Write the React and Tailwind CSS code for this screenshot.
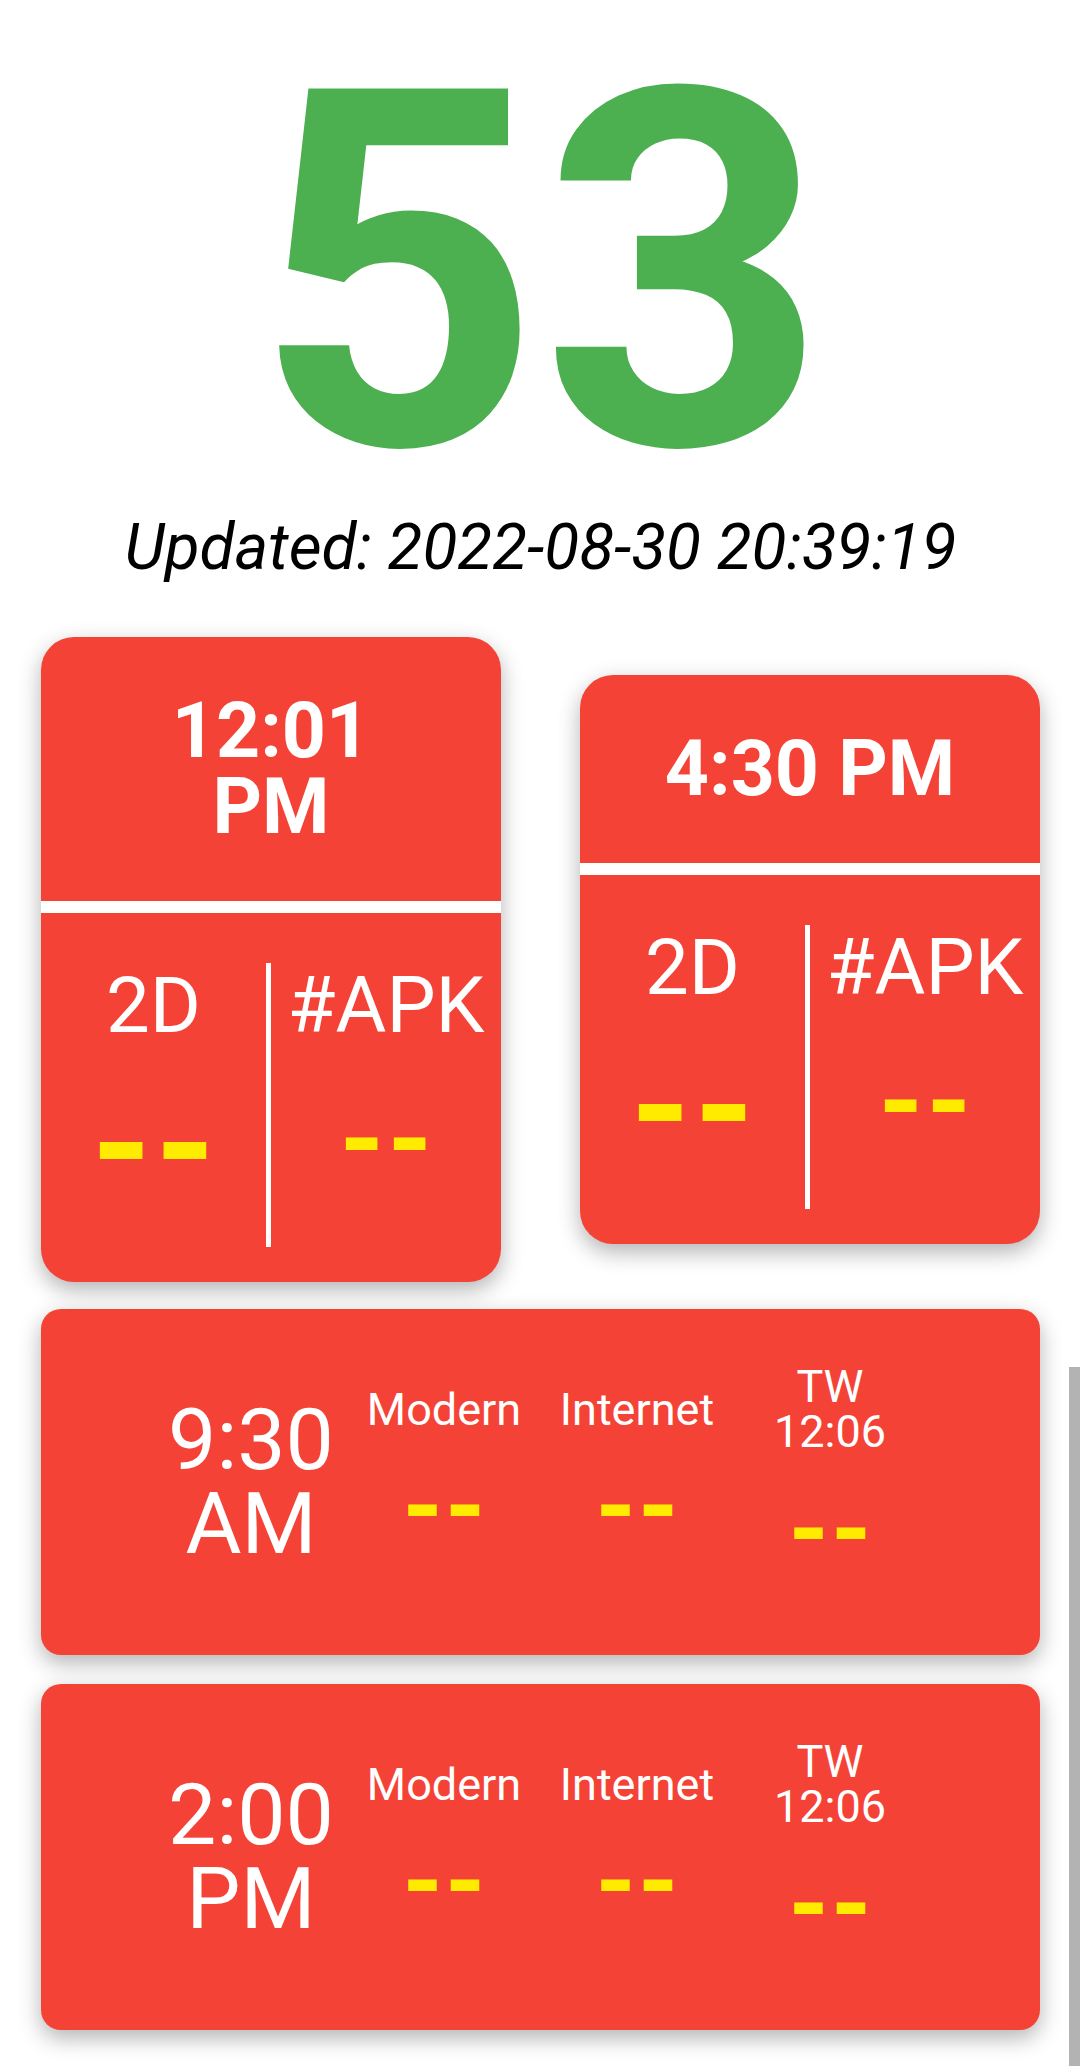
import React from 'react';

const Dash = ({ box, text }) => (
    <div className={`flex items-center justify-center ${box}`}>
        <span className={`font-bold leading-none text-[#ffeb00] whitespace-nowrap ${text}`}>--</span>
    </div>
);

const DrawCard = ({ children }) => (
    <div className="w-[460px] rounded-[33px] bg-[#f44336] overflow-hidden shadow-[0_8px_22px_rgba(0,0,0,0.3)]">
        <div className="py-[56px] text-center text-white text-[77px] leading-[76px] font-bold">
            {children}
        </div>
        <div className="h-[12px] bg-white" />
        <div className="pt-[50px] pb-[35px]">
            <div className="flex h-[284px]">
                <div className="w-[225px] flex flex-col items-center">
                    <div className="mt-[4px] text-white text-[78px] leading-[78px]">2D</div>
                    <Dash box="h-[204px]" text="text-[154px] tracking-[3px] pl-[3px]" />
                </div>
                <div className="w-[5px] bg-white" />
                <div className="flex-1 flex flex-col items-center">
                    <div className="mt-[4px] text-white text-[78px] leading-[78px]">#APK</div>
                    <Dash box="h-[188px]" text="text-[114px] tracking-[3px] pl-[3px]" />
                </div>
            </div>
        </div>
    </div>
);

const Slot = ({ label }) => (
    <div className="w-[193px] flex flex-col items-center text-center">
        <div className="text-white text-[45px] leading-[45px]">{label}</div>
        <Dash box="mt-[4px] h-[142px]" text="text-[103px] tracking-[2px] pl-[2px]" />
    </div>
);

const SlotCard = ({ time, half, className }) => (
    <div className={`h-[346px] rounded-[20px] bg-[#f44336] flex items-center justify-center shadow-[0_8px_22px_rgba(0,0,0,0.3)] ${className}`}>
        <div className="w-[193px] text-center text-white text-[86px] leading-[84px]">
            {time}
            <br />
            {half}
        </div>
        <Slot label="Modern" />
        <Slot label="Internet" />
        <Slot label={<>TW<br />12:06</>} />
    </div>
);

export default function App() {
    return (
        <div className="relative min-h-screen bg-white font-['Roboto',sans-serif] pl-[41px] pr-[40px] pb-[40px]">
            <div className="pt-[73px] text-center text-[500px] leading-[400px] font-bold text-[#4caf50]">53</div>
            <p className="mt-[43px] text-center text-[64px] leading-[64px] italic text-black">
                Updated: 2022-08-30 20:39:19
            </p>

            <div className="mt-[57px] flex items-center justify-between">
                <DrawCard>
                    12:01
                    <br />
                    PM
                </DrawCard>
                <DrawCard>4:30 PM</DrawCard>
            </div>

            <SlotCard className="mt-[27px]" time="9:30" half="AM" />
            <SlotCard className="mt-[29px]" time="2:00" half="PM" />

            {/* scroll indicator */}
            <div className="absolute right-0 top-[1367px] h-[699px] w-[11px] bg-[#b3b3b3]" />
        </div>
    );
}
